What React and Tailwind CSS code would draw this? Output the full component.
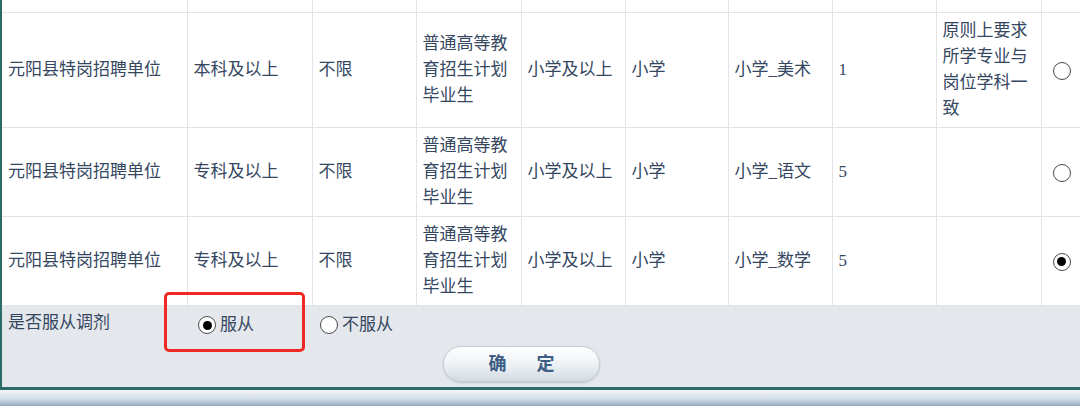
import React, { useState } from 'react';

const rows = [
  { unit: '元阳县特岗招聘单位', edu: '本科及以上', age: '不限', src: '普通高等教育招生计划毕业生', level: '小学及以上', seg: '小学', subj: '小学_美术', num: '1', note: '原则上要求所学专业与岗位学科一致' },
  { unit: '元阳县特岗招聘单位', edu: '专科及以上', age: '不限', src: '普通高等教育招生计划毕业生', level: '小学及以上', seg: '小学', subj: '小学_语文', num: '5', note: '' },
  { unit: '元阳县特岗招聘单位', edu: '专科及以上', age: '不限', src: '普通高等教育招生计划毕业生', level: '小学及以上', seg: '小学', subj: '小学_数学', num: '5', note: '' },
];

const widths = [185, 125, 104, 105, 104, 103, 104, 104, 105, 39];

// radio drawn with css so it looks like the old browser control
const Radio = ({ checked }) => (
  <span className="inline-flex items-center justify-center w-[18px] h-[18px] rounded-full border-[1.5px] border-[#4a4a4a] bg-white">
    {checked && <span className="w-[9px] h-[9px] rounded-full bg-black" />}
  </span>
);

const cell = 'border border-[#e3e3e3] px-[6px] py-[5px] align-middle text-left';

export default function App() {
  const [pick, setPick] = useState(2);
  const [obey, setObey] = useState(true);

  return (
    <div
      className="w-[1080px] h-[406px] overflow-hidden bg-white text-[#34475f] text-[17px] leading-[26px]"
      style={{ fontFamily: '"Liberation Serif", "Noto Sans CJK SC", serif' }}
    >
      <div className="relative border-l-2 border-b-[3px] border-[#2c6b67]">
        <table className="table-fixed border-collapse w-[1078px]">
          <colgroup>
            {widths.map((w, i) => (
              <col key={i} style={{ width: w }} />
            ))}
          </colgroup>
          <tbody>
            {/* tail of the previous row, cut off by the window */}
            <tr className="h-[12px]">
              {widths.map((_, i) => (
                <td key={i} className={`border-b border-r border-[#e3e3e3] p-0 ${i === widths.length - 1 ? 'border-r-0' : ''}`} />
              ))}
            </tr>
            {rows.map((r, i) => (
              <tr key={i}>
                <td className={`${cell} border-l-0`}>{r.unit}</td>
                <td className={cell}>{r.edu}</td>
                <td className={cell}>{r.age}</td>
                <td className={cell}>{r.src}</td>
                <td className={cell}>{r.level}</td>
                <td className={cell}>{r.seg}</td>
                <td className={cell}>{r.subj}</td>
                <td className={cell}>{r.num}</td>
                <td className={cell}>{r.note}</td>
                <td className={`${cell} border-r-0 text-center`}>
                  <button onClick={() => setPick(i)} className="inline-flex align-middle ml-[5px]">
                    <Radio checked={pick === i} />
                  </button>
                </td>
              </tr>
            ))}
          </tbody>
        </table>

        <div className="bg-[#e4e7ec] pt-[5px] pb-[5px]">
          <div className="flex items-center h-[26px]">
            <div className="w-[196px] pl-[6px] -mt-[2px]">是否服从调剂</div>
            <button onClick={() => setObey(true)} className="flex items-center gap-[4px] mt-[3px]">
              <Radio checked={obey} />
              <span>服从</span>
            </button>
            <button onClick={() => setObey(false)} className="flex items-center gap-[4px] ml-[66px] mt-[3px]">
              <Radio checked={!obey} />
              <span>不服从</span>
            </button>
          </div>
          <div className="mt-[9px] pl-[441px]">
            <button className="w-[157px] h-[36px] rounded-full border border-[#c3cbd4] bg-gradient-to-b from-[#ffffff] via-[#eef2f5] to-[#d3dbe3] shadow-[0_1px_2px_rgba(0,0,0,0.15)] flex items-center justify-center gap-[30px] text-[18px] text-[#3d5d84] font-bold">
              <span>确</span>
              <span>定</span>
            </button>
          </div>
        </div>

        {/* red annotation box */}
        <div className="absolute left-[162px] top-[292px] w-[141px] h-[60px] border-[3px] border-[#ee2a22] rounded-[5px]" />
      </div>
      <div className="h-[17px] bg-gradient-to-b from-[#f3f6f8] via-[#d6e0ea] to-[#8aa2bb]" />
    </div>
  );
}
